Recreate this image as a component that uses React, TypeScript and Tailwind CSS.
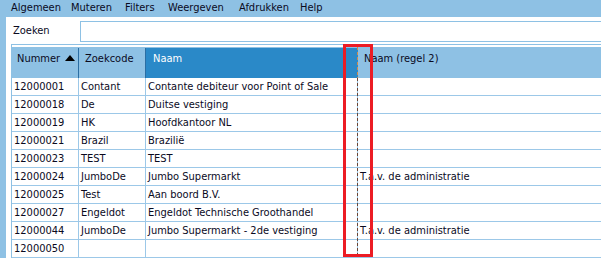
import React from "react";

const menu: [string, string][] = [
  ["Algemeen", "w-[60px]"],
  ["Muteren", "w-[54px]"],
  ["Filters", "w-[43px]"],
  ["Weergeven", "w-[71px]"],
  ["Afdrukken", "w-[61px]"],
  ["Help", "w-[40px]"],
];

const rows: [string, string, string, string][] = [
  ["12000001", "Contant", "Contante debiteur voor Point of Sale", ""],
  ["12000018", "De", "Duitse vestiging", ""],
  ["12000019", "HK", "Hoofdkantoor NL", ""],
  ["12000021", "Brazil", "Brazilië", ""],
  ["12000023", "TEST", "TEST", ""],
  ["12000024", "JumboDe", "Jumbo Supermarkt", "T.a.v. de administratie"],
  ["12000025", "Test", "Aan boord B.V.", ""],
  ["12000027", "Engeldot", "Engeldot Technische Groothandel", ""],
  ["12000044", "JumboDe", "Jumbo Supermarkt - 2de vestiging", "T.a.v. de administratie"],
  ["12000050", "", "", ""],
];

const App = () => (
  <div className="relative flex h-[258px] w-[601px] flex-col overflow-hidden bg-[#8ec1e4] font-['DejaVu_Sans_Condensed','DejaVu_Sans',sans-serif] text-[11px] text-[#0a0a1e]">
    {/* menu bar */}
    <div className="flex h-[17px] items-center pl-[11px]">
      {menu.map(([m, w]) => (
        <span key={m} className={w}>
          {m}
        </span>
      ))}
    </div>

    <div className="ml-[6px] flex flex-1 flex-col bg-white">
      {/* search row */}
      <div className="flex h-[27px] items-center pl-[7px] pt-[1px]">
        <span className="w-[67px]">Zoeken</span>
        <div className="h-[21px] flex-1 border border-r-0 border-[#8ec1e4] bg-white" />
      </div>

      {/* grid */}
      <div className="ml-[5px] flex-1 border-l border-t border-[#8ec1e4] pt-[2px]">
        <div className="flex h-[31px] border-t border-[#8ec1e4] bg-[#8ec1e4]">
          <div className="flex w-[67px] items-start gap-[5px] border-r border-[#2b6ea3] pl-[5px] pt-[3px]">
            <span>Nummer</span>
            <svg width="10" height="6" viewBox="0 0 10 6" className="mt-[4px]">
              <path d="M5 0 L10 6 L0 6 Z" fill="#000" />
            </svg>
          </div>
          <div className="w-[67px] border-r border-[#2b6ea3] pl-[6px] pt-[3px]">Zoekcode</div>
          <div className="w-[212px] bg-[#2a89c8] pl-[7px] pt-[3px] text-white">Naam</div>
          <div className="flex-1 pl-[6px] pt-[3px]">Naam (regel 2)</div>
        </div>
        {rows.map((r) => (
          <div key={r[0]} className="flex h-[18px] border-b border-[#9cc8e8]">
            <div className="w-[67px] border-r border-[#9cc8e8] pl-[2px] leading-[17px]">{r[0]}</div>
            <div className="w-[67px] border-r border-[#9cc8e8] pl-[2px] leading-[17px]">{r[1]}</div>
            <div className="w-[212px] whitespace-nowrap pl-[2px] leading-[17px]">{r[2]}</div>
            <div className="flex-1 whitespace-nowrap pl-[2px] leading-[17px]">{r[3]}</div>
          </div>
        ))}
      </div>
    </div>

    {/* column drag marker */}
    <div className="absolute left-[357px] top-[47px] h-[31px] w-px bg-[repeating-linear-gradient(to_bottom,#d08a4a_0,#d08a4a_3px,transparent_3px,transparent_5px)]" />
    <div className="absolute bottom-0 left-[357px] top-[78px] w-px bg-[repeating-linear-gradient(to_bottom,#6a4636_0,#6a4636_3px,#9cc8e8_3px,#9cc8e8_5px)]" />
    {/* annotation */}
    <div className="absolute left-[343px] top-[44px] h-[213px] w-[30px] border-[3px] border-[#ec1c24]" />
  </div>
);

export default App;
